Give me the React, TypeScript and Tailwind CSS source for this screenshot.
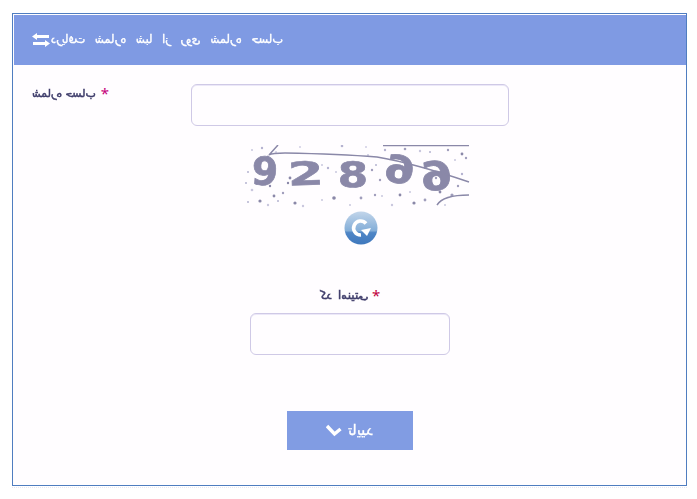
import type { ReactNode } from "react";

const arabicFont = "font-['DejaVu_Sans','Noto_Sans',sans-serif]";

const dots: [number, number, number, string][] = [
  [252,150,1,"#c9c7de"],[262,148,1.2,"#b5b3d0"],[268,157,1.4,"#a09ebc"],[276,152,1,"#d0cee4"],[300,147,1,"#d0cee4"],[342,146,1.3,"#b5b3d0"],[366,147,1,"#d0cee4"],[385,150,1.2,"#b5b3d0"],[405,149,1.3,"#a09ebc"],[420,151,1.2,"#c9c7de"],[448,150,1.2,"#a09ebc"],[462,154,1.4,"#8a88a8"],
  [246,183,1,"#b5b3d0"],[252,190,1.3,"#c9c7de"],[260,201,1.6,"#8a88a8"],[274,196,1.4,"#8a88a8"],[283,193,1.2,"#a09ebc"],[295,203,1.6,"#8a88a8"],[270,186,1.2,"#8a88a8"],[290,178,1.4,"#8a88a8"],[310,172,1,"#c9c7de"],[328,168,1.2,"#b5b3d0"],[336,172,1,"#c9c7de"],
  [334,198,1.8,"#8a88a8"],[350,205,1,"#c9c7de"],[361,198,1.4,"#a09ebc"],[372,170,1.2,"#a09ebc"],[375,195,1.2,"#a09ebc"],[382,196,1,"#c9c7de"],[400,195,1.4,"#8a88a8"],[410,192,1,"#c9c7de"],[414,203,1.6,"#8a88a8"],[425,200,1.4,"#a09ebc"],[440,192,1.4,"#8a88a8"],[452,195,1.6,"#a09ebc"],[436,178,1.2,"#a09ebc"],[462,174,1.2,"#b5b3d0"],[466,158,1.2,"#a09ebc"],
  [248,202,1,"#b5b3d0"],[268,205,1.2,"#c9c7de"],[303,206,1.2,"#c9c7de"],[322,200,1,"#c9c7de"],[392,205,1.2,"#c9c7de"],[405,172,1,"#b5b3d0"],[445,205,1,"#c9c7de"],[322,165,1,"#c9c7de"],[248,172,1,"#b5b3d0"],[368,155,1,"#c9c7de"],[380,180,1.2,"#a09ebc"],[458,186,1.2,"#a09ebc"],
  [288,183,1.2,"#8a88a8"],[278,201,1,"#b5b3d0"],[376,165,1,"#b5b3d0"],[430,152,1,"#b5b3d0"],[455,160,1,"#c9c7de"],
];

// char, center x, baseline y, rotation, scale x, scale y
const digits: [string, number, number, number, number, number][] = [
  ["9", 264, 185, 4, 1, 1.02],
  ["2", 306, 185, -2, 1.35, 0.85],
  ["8", 353, 187, 0, 1.15, 0.95],
  ["6", 398, 183, 8, -1.15, 1],
  ["6", 438, 190, -6, -1.2, 1.05],
];

const Captcha = () => (
  <svg width="226" height="64" viewBox="244 145 226 64" className="blur-[0.4px] ml-[13px]">
    {dots.map(([x, y, r, c], i) => (
      <circle key={i} cx={x} cy={y} r={r} fill={c} />
    ))}
    <g fill="#8a88a8" stroke="#8a88a8" strokeWidth="0.7" fontFamily="'DejaVu Sans'" fontWeight="700" fontSize="38" textAnchor="middle">
      {digits.map(([d, x, y, a, sx, sy], i) => (
        <text key={i} transform={`translate(${x} ${y}) rotate(${a}) scale(${sx} ${sy})`}>
          {d}
        </text>
      ))}
    </g>
    <g fill="none" stroke="#8a88a8" strokeWidth="1.5">
      <path d="M278 145L269 155Q272 153 285 153Q340 154 377 157Q413 163 469 182" />
      <path d="M383 145.5H469" />
      <path d="M437 205Q443 195 469 195" />
    </g>
  </svg>
);

const RefreshButton = () => (
  <svg width="34" height="34" viewBox="0 0 34 34">
    <defs>
      <linearGradient id="refreshBg" x1="0" y1="0" x2="0" y2="1">
        <stop offset="0" stopColor="#c2d5ea" />
        <stop offset="0.58" stopColor="#84aed8" />
        <stop offset="0.64" stopColor="#4f86c6" />
        <stop offset="1" stopColor="#3f78bd" />
      </linearGradient>
    </defs>
    <circle cx="17" cy="17" r="16.5" fill="url(#refreshBg)" />
    <path d="M22 12.5A7 7 0 1 0 17 24" fill="none" stroke="#fff" strokeWidth="3.6" />
    <path d="M17 19L27 17L23 25Z" fill="#fff" />
  </svg>
);

const Mirrored = ({ children, className }: { children: ReactNode; className?: string }) => (
  <span dir="rtl" className={`inline-block -scale-x-100 whitespace-nowrap ${arabicFont} ${className ?? ""}`}>
    {children}
  </span>
);

const Required = ({ className }: { className: string }) => (
  <span className={`text-[15px] leading-none ${className}`}>*</span>
);

export default function App() {
  return (
    <div className="w-[697px] h-[499px] bg-white pt-[13px] pl-[12px]">
      <div className="w-[675px] h-[473px] bg-[#fffdff] border border-[#4f7dc0] pt-px pl-px flex flex-col">
        <div className="h-[50px] bg-[#7f9ae3] flex items-center pl-[18px] gap-[1px] text-white shrink-0">
          <svg width="18" height="14" viewBox="0 0 18 14" fill="#fff">
            <path d="M0 3.5L5 0V2H17V5H5V7Z" />
            <path d="M18 10.5L13 7V9H1V12H13V14Z" />
          </svg>
          <Mirrored className="text-[11.5px] leading-none [word-spacing:6px] [-webkit-text-stroke:0.35px]">دریافت شماره شبا از روی شماره حساب</Mirrored>
        </div>

        <div className="grid grid-cols-[177px_318px_1fr] mt-[19px]">
          <div className="pl-[18px] pt-[2px] flex items-start gap-[5px] text-[#3f3d6b]">
            <Mirrored className="text-[11px] leading-[16px] [-webkit-text-stroke:0.5px]">شماره حساب</Mirrored>
            <Required className="text-[#c4007a]" />
          </div>
          <input className="h-[42px] rounded-[6px] border border-[#cfc9e6] bg-[#fffdff] shadow-[inset_0_1px_0_#ece8f8]" />
        </div>

        <div className="flex flex-col items-center mt-[19px]">
          <Captcha />
          <div className="mt-[2px] ml-[22px]">
            <RefreshButton />
          </div>
          <div className="flex items-center gap-[4px] mt-[42px] text-[#3f3d6b]">
            <Mirrored className="text-[12px] leading-[16px] [word-spacing:2px] [-webkit-text-stroke:0.5px]">کد امنیتی</Mirrored>
            <Required className="text-[#c0003c]" />
          </div>
          <input className="w-[200px] h-[42px] mt-[10px] rounded-[6px] border border-[#cfc9e6] bg-[#fffdff] shadow-[inset_0_1px_0_#ece8f8]" />
          <button className="w-[126px] h-[39px] mt-[56px] bg-[#819ce3] text-white flex items-center justify-center gap-[6px]">
            <svg width="16" height="13" viewBox="0 0 16 13" fill="none" stroke="#fff" strokeWidth="3.4">
              <path d="M1 2L8.5 10L14.5 5" />
            </svg>
            <Mirrored className="text-[15px] leading-none [-webkit-text-stroke:0.3px]">تایید</Mirrored>
          </button>
        </div>
      </div>
      <div className="w-[675px] h-0 mt-px border-b border-dotted border-[#e8e6f2]" />
    </div>
  );
}
